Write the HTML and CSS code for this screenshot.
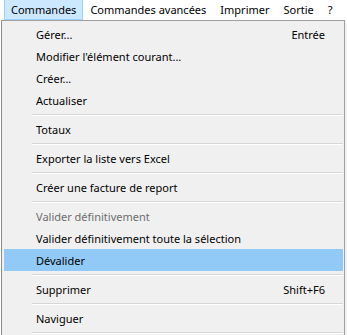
FILE: index.html
```html
<!DOCTYPE html>
<html lang="fr">
<head>
    <meta charset="UTF-8">
    <title>Commandes</title>
    <link rel="stylesheet" href="styles.css">
</head>
<body>
    <div class="barre-menu">
        <span class="menu-item actif">Commandes</span>
        <span class="menu-item">Commandes avancées</span>
        <span class="menu-item">Imprimer</span>
        <span class="menu-item">Sortie</span>
        <span class="menu-item">?</span>
    </div>

    <div class="liste">
        <div class="ligne"><span>Gérer...</span><span class="raccourci">Entrée</span></div>
        <div class="ligne"><span>Modifier l'élément courant...</span></div>
        <div class="ligne"><span>Créer...</span></div>
        <div class="ligne"><span>Actualiser</span></div>
        <div class="separateur"></div>
        <div class="ligne"><span>Totaux</span></div>
        <div class="separateur"></div>
        <div class="ligne"><span>Exporter la liste vers Excel</span></div>
        <div class="separateur"></div>
        <div class="ligne"><span>Créer une facture de report</span></div>
        <div class="separateur"></div>
        <div class="ligne inactive"><span>Valider définitivement</span></div>
        <div class="ligne"><span>Valider définitivement toute la sélection</span></div>
        <div class="ligne survol"><span>Dévalider</span></div>
        <div class="separateur"></div>
        <div class="ligne"><span>Supprimer</span><span class="raccourci">Shift+F6</span></div>
        <div class="separateur"></div>
        <div class="ligne"><span>Naviguer</span></div>
        <div class="separateur"></div>
    </div>
</body>
</html>
```

FILE: styles.css
```css
body {
    margin: 0;
    background: #fff;
    font-family: "Noto Sans", "Open Sans", sans-serif;
    font-size: 11px;
    color: #000;
    overflow: hidden;
    height: 335px;
}

.barre-menu {
    display: flex;
    height: 20px;
    padding-left: 4px;
    background: #fff;
    white-space: nowrap;
}

.menu-item {
    display: flex;
    align-items: center;
    padding: 0 6px;
    border: 1px solid transparent;
    border-top: 0;
}

.menu-item.actif {
    background: #cce8ff;
    border-color: #99d1ff;
}

.liste {
    margin-left: 1px;
    width: 339px;
    border: 1px solid #a0a0a0;
    border-left-color: #8c8c8c;
    padding: 2px 1px 2px 2px;
    background: #f0f0f0;
    box-shadow: 2px 2px 2px rgba(0, 0, 0, 0.08);
    white-space: nowrap;
}

.ligne {
    display: flex;
    justify-content: space-between;
    align-items: center;
    height: 22px;
    padding: 0 18px 0 32px;
}

.ligne.inactive {
    color: #6d6d6d;
}

.ligne.survol {
    background: #91c9f7;
}

.separateur {
    height: 7px;
    margin-left: 28px;
    position: relative;
}

.separateur::after {
    content: "";
    position: absolute;
    left: 0;
    right: 0;
    top: 3px;
    border-top: 1px solid #d7d7d7;
    border-bottom: 1px solid #fff;
}
```
